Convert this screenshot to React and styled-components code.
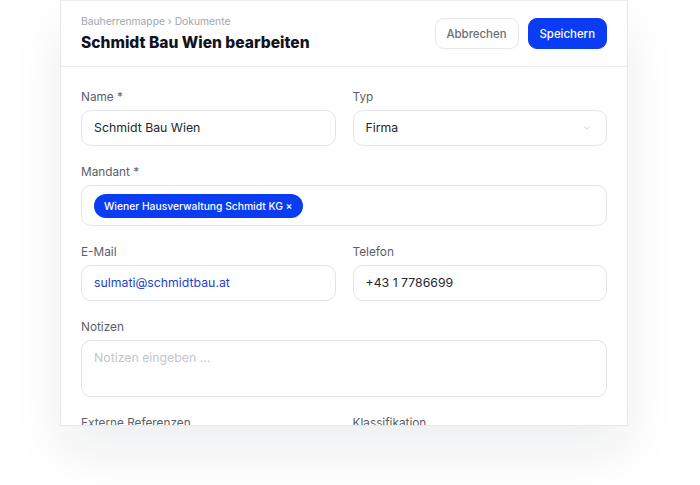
import React from 'react';
import styled, { createGlobalStyle } from 'styled-components';
import { ChevronDown } from 'lucide-react';

const GlobalStyle = createGlobalStyle`
  html, body {
    margin: 0;
    padding: 0;
    background: #ffffff;
    font-family: Inter, "Noto Sans", sans-serif;
    -webkit-font-smoothing: antialiased;
  }
`;

const Page = styled.div`
  width: 700px;
  height: 485px;
  overflow: hidden;
  padding-left: 60px;
  box-sizing: border-box;
`;

const Card = styled.div`
  width: 568px;
  height: 426px;
  box-sizing: border-box;
  background: #ffffff;
  border: 1px solid #e6e7eb;
  border-top-color: #eeeff2;
  overflow: hidden;
  box-shadow: 0 26px 50px rgba(20, 25, 45, 0.07);
`;

const Header = styled.div`
  height: 66px;
  box-sizing: border-box;
  padding: 0 20px;
  display: flex;
  align-items: center;
  justify-content: space-between;
  border-bottom: 1px solid #ececef;
`;

const TitleBlock = styled.div`
  display: flex;
  flex-direction: column;
  gap: 4px;
`;

const Breadcrumb = styled.div`
  font-size: 10.3px;
  line-height: 14px;
  color: #a2a5ad;
`;

const Title = styled.h1`
  margin: 0;
  font-size: 15.6px;
  line-height: 22px;
  font-weight: 800;
  color: #11141f;
`;

const Actions = styled.div`
  display: flex;
  gap: 9px;
`;

const Button = styled.button`
  height: 31px;
  padding: 0 11px;
  border-radius: 9px;
  font-family: inherit;
  font-size: 11.4px;
  font-weight: 500;
  cursor: pointer;
  border: 1px solid ${(p) => (p.$primary ? '#0a3cf4' : '#e6e7eb')};
  background: ${(p) => (p.$primary ? '#0a3cf4' : '#ffffff')};
  color: ${(p) => (p.$primary ? '#ffffff' : '#6b6e77')};
`;

const Body = styled.div`
  padding: 22px 20px 0 20px;
  display: grid;
  grid-template-columns: 1fr 1fr;
  column-gap: 17px;
  row-gap: 18px;
`;

const Field = styled.div`
  display: flex;
  flex-direction: column;
  gap: 5px;
  grid-column: ${(p) => (p.$wide ? '1 / -1' : 'auto')};
`;

const Label = styled.label`
  font-size: 11.8px;
  line-height: 16px;
  color: #5b5e67;
`;

const Input = styled.div`
  height: ${(p) => p.$height || 36}px;
  box-sizing: border-box;
  border: 1px solid #e3e4e8;
  border-radius: 10px;
  padding: ${(p) => (p.$top ? '9px 12px 0' : '0 12px')};
  display: flex;
  align-items: ${(p) => (p.$top ? 'flex-start' : 'center')};
  justify-content: space-between;
  font-size: 12.3px;
  line-height: 16px;
  color: ${(p) => p.$color || '#24262d'};
`;

const Chevron = styled(ChevronDown)`
  color: #c8cad0;
  margin-right: 2px;
`;

const Chip = styled.span`
  height: 24px;
  padding: 0 10px;
  border-radius: 12px;
  background: #0a3cf4;
  color: #ffffff;
  font-size: 10.3px;
  font-weight: 500;
  display: inline-flex;
  align-items: center;
`;

export default function App() {
  return (
    <Page>
      <GlobalStyle />
      <Card>
        <Header>
          <TitleBlock>
            <Breadcrumb>Bauherrenmappe › Dokumente</Breadcrumb>
            <Title>Schmidt Bau Wien bearbeiten</Title>
          </TitleBlock>
          <Actions>
            <Button>Abbrechen</Button>
            <Button $primary>Speichern</Button>
          </Actions>
        </Header>
        <Body>
          <Field>
            <Label>Name *</Label>
            <Input>Schmidt Bau Wien</Input>
          </Field>
          <Field>
            <Label>Typ</Label>
            <Input>
              Firma
              <Chevron size={10} strokeWidth={2} />
            </Input>
          </Field>
          <Field $wide>
            <Label>Mandant *</Label>
            <Input $height={41}>
              <Chip>Wiener Hausverwaltung Schmidt KG ×</Chip>
            </Input>
          </Field>
          <Field>
            <Label>E-Mail</Label>
            <Input $color="#1f43cc">sulmati@schmidtbau.at</Input>
          </Field>
          <Field>
            <Label>Telefon</Label>
            <Input>+43 1 7786699</Input>
          </Field>
          <Field $wide>
            <Label>Notizen</Label>
            <Input $height={57} $top $color="#c4c6cc">
              Notizen eingeben ...
            </Input>
          </Field>
          <Field>
            <Label>Externe Referenzen</Label>
            <Input />
          </Field>
          <Field>
            <Label>Klassifikation</Label>
            <Input />
          </Field>
        </Body>
      </Card>
    </Page>
  );
}
